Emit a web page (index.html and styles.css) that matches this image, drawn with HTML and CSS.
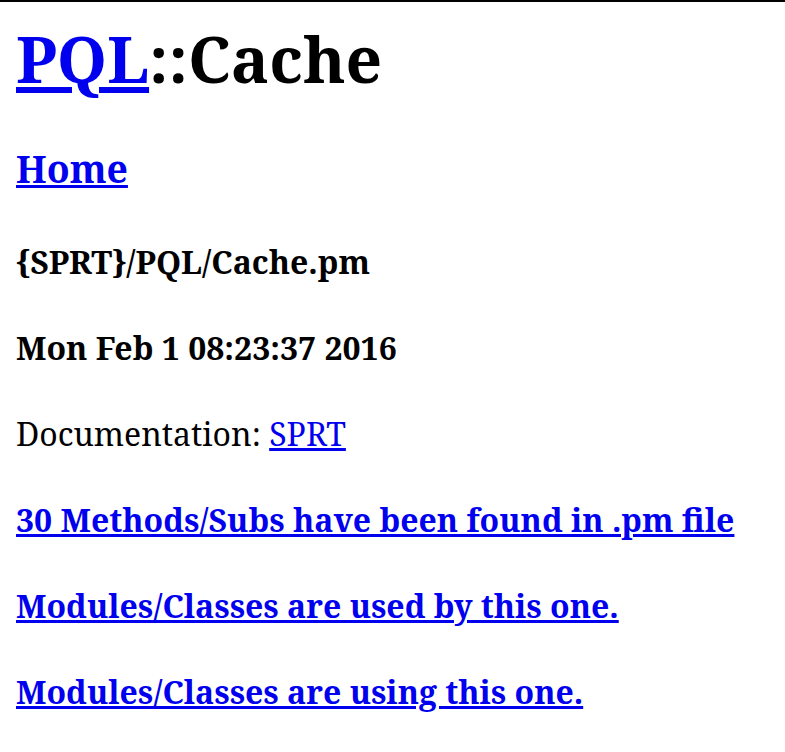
FILE: index.html
```html
<!DOCTYPE html>
<html>
<head>
<meta charset="utf-8">
<title>PQL::Cache</title>
<link rel="stylesheet" href="styles.css">
</head>
<body>
<h1 class="title"><a href="#">PQL</a>::Cache</h1>
<h3 class="home"><a href="#">Home</a></h3>
<h4 class="info">{SPRT}/PQL/Cache.pm</h4>
<h4 class="info">Mon Feb 1 08:23:37 2016</h4>
<p class="doc">Documentation: <a href="#">SPRT</a></p>
<h4 class="info"><a href="#">30 Methods/Subs have been found in .pm file</a></h4>
<h4 class="info"><a href="#">Modules/Classes are used by this one.</a></h4>
<h4 class="info"><a href="#">Modules/Classes are using this one.</a></h4>
</body>
</html>
```
FILE: styles.css
```css
html {
  background: #fff;
}
body {
  margin: 0;
  padding: 0 16px;
  border-top: 2px solid #000;
  font-family: "Noto Serif", serif;
  font-size: 32px;
  color: #000;
}
a {
  color: #0000ee;
}
.title {
  font-size: 64px;
  line-height: 87px;
  margin: 13px 0 41px;
}
.home {
  font-size: 37.44px;
  line-height: 51px;
  margin: 0 0 46px;
}
.info {
  font-size: 32px;
  line-height: 43.6px;
  margin: 0 0 42.5px;
}
.doc {
  font-size: 32px;
  line-height: 43.6px;
  margin: 0 0 42.5px;
}
```
